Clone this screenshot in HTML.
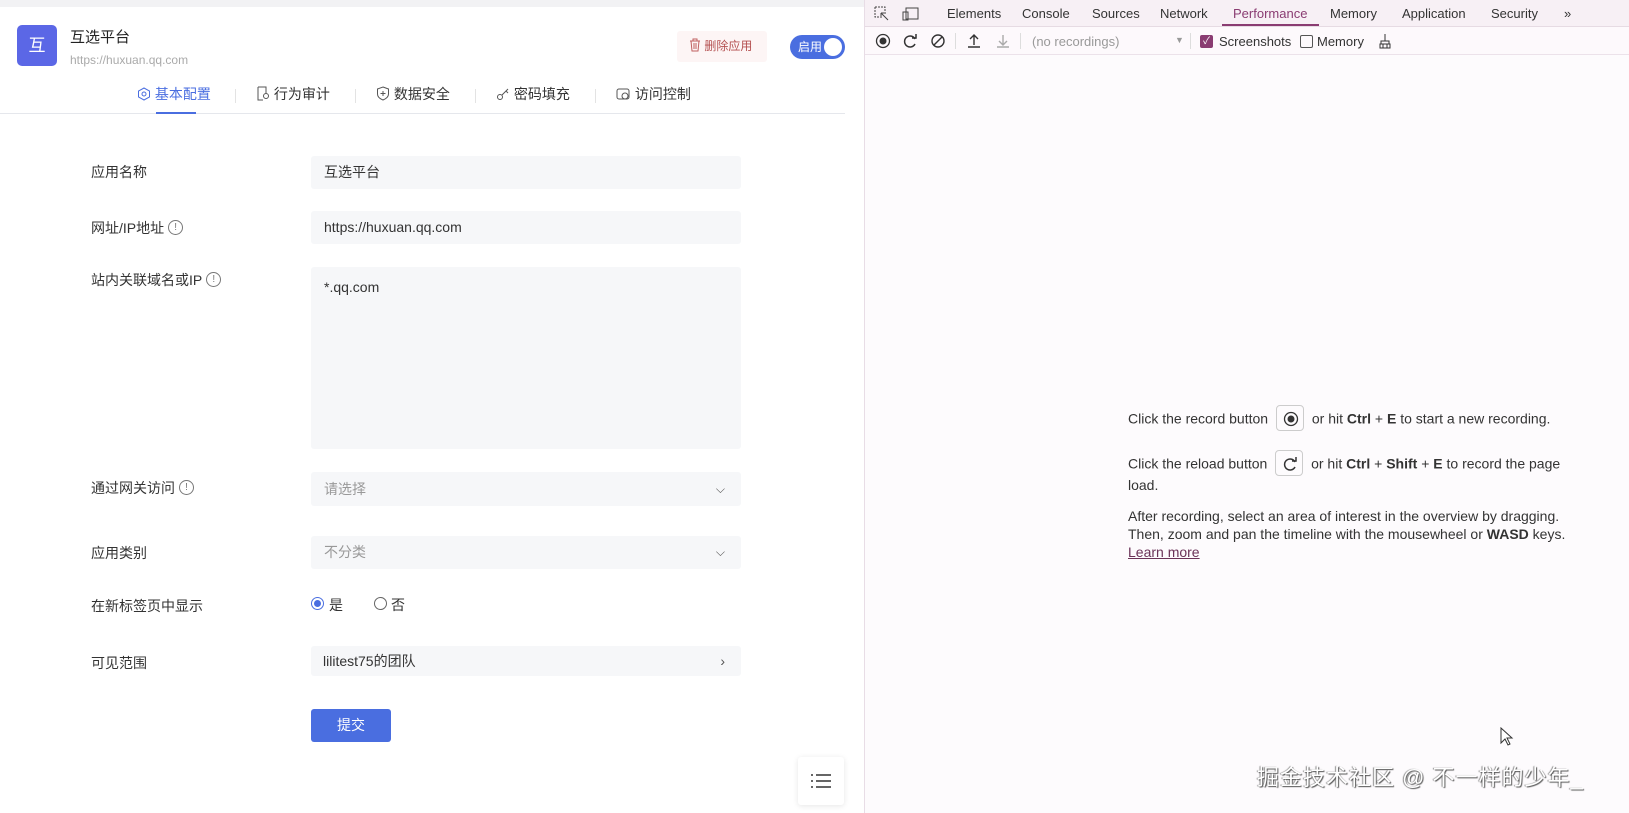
<!DOCTYPE html>
<html><head><meta charset="utf-8"><style>
*{box-sizing:border-box;margin:0;padding:0}
body{width:1629px;height:813px;overflow:hidden;position:relative;background:#fff;font-family:"Liberation Sans","Noto Sans CJK SC",sans-serif;color:#333}
.a{position:absolute}
.lbl{position:absolute;left:91px;font-size:14px;color:#333}
.inp{position:absolute;left:311px;width:430px;background:#f6f7f9;border-radius:3px;font-size:14px;color:#333;padding-left:13px}
.info{display:inline-block;width:15px;height:15px;border:1px solid #777;border-radius:50%;font-size:10px;line-height:13px;text-align:center;color:#777;vertical-align:middle;margin-left:4px;position:relative;top:-2px}
.tab{position:absolute;top:84px;font-size:14px;color:#333}
.sep{position:absolute;top:89px;width:1px;height:14px;background:#e3e3e3}
.dt{position:absolute;top:6px;font-size:13px;color:#333}
.msg{position:absolute;left:1128px;font-size:14px;color:#333}
.kb{display:inline-block;width:28px;height:26px;border:1px solid #ccc;border-radius:4px;vertical-align:middle;margin:0 4px;position:relative}
</style></head><body>
<div class="a" style="left:0;top:0;width:864px;height:7px;background:#f2f2f4"></div>
<div class="a" style="left:17px;top:25px;width:40px;height:41px;background:#5b67e6;border-radius:5px;color:#fff;font-size:17px;text-align:center;line-height:41px">互</div>
<div class="a" style="left:70px;top:26px;font-size:15px;color:#222">互选平台</div>
<div class="a" style="left:70px;top:53px;font-size:12px;color:#aaa">https://huxuan.qq.com</div>
<div class="a" style="left:677px;top:31px;width:90px;height:31px;background:#fdf5f5;border-radius:3px;font-size:12px;color:#b45050;line-height:31px;padding-left:12px">
<svg width="12" height="14" viewBox="0 0 12 14" style="vertical-align:-2px"><path d="M1 3h10M4 3V1h4v2M2 3l1 10h6l1-10M5 5v6M7 5v6" fill="none" stroke="#c06060" stroke-width="1"/></svg> 删除应用</div>
<div class="a" style="left:790px;top:35px;width:55px;height:24px;background:#4a6ee0;border-radius:12px;color:#fff;font-size:12px;line-height:24px;padding-left:8px">启用<span class="a" style="right:3px;top:3px;width:18px;height:18px;background:#fff;border-radius:50%"></span></div>

<div class="tab" style="left:137px;color:#4a6ee0"><svg width="14" height="14" style="vertical-align:-2px"><polygon points="7,1 12.5,4 12.5,10 7,13 1.5,10 1.5,4" fill="none" stroke="#4a6ee0"/><circle cx="7" cy="7" r="2" fill="none" stroke="#4a6ee0"/></svg> 基本配置</div>
<div class="sep" style="left:235px"></div>
<div class="tab" style="left:256px"><svg width="14" height="15" style="vertical-align:-2px"><path d="M2 1h8v6M2 1v13h5" fill="none" stroke="#555"/><circle cx="10" cy="10" r="2.5" fill="none" stroke="#555"/></svg> 行为审计</div>
<div class="sep" style="left:355px"></div>
<div class="tab" style="left:376px"><svg width="14" height="15" style="vertical-align:-2px"><path d="M7 1l5.5 2v5c0 3-3 5-5.5 6C4.5 13 1.5 11 1.5 8V3z M7 5v5M4.5 7.5h5" fill="none" stroke="#555"/></svg> 数据安全</div>
<div class="sep" style="left:475px"></div>
<div class="tab" style="left:496px"><svg width="14" height="14" style="vertical-align:-2px"><circle cx="4" cy="10" r="2.5" fill="none" stroke="#555"/><path d="M6 8l6-6M10 4l2 2" fill="none" stroke="#555"/></svg> 密码填充</div>
<div class="sep" style="left:595px"></div>
<div class="tab" style="left:616px"><svg width="15" height="14" style="vertical-align:-2px"><rect x="1" y="2" width="12" height="10" rx="2" fill="none" stroke="#555"/><circle cx="9" cy="9" r="3" fill="#fff" stroke="#555"/></svg> 访问控制</div>
<div class="a" style="left:0;top:113px;width:845px;height:1px;background:#e5e7ec"></div>
<div class="a" style="left:156px;top:112px;width:40px;height:2px;background:#4a6ee0"></div>

<div class="lbl" style="top:162px">应用名称</div>
<div class="inp" style="top:156px;height:33px;line-height:33px">互选平台</div>
<div class="lbl" style="top:218px">网址/IP地址<span class="info">!</span></div>
<div class="inp" style="top:211px;height:33px;line-height:33px">https://huxuan.qq.com</div>
<div class="lbl" style="top:270px">站内关联域名或IP<span class="info">!</span></div>
<div class="inp" style="top:267px;height:182px;padding-top:12px">*.qq.com</div>
<div class="lbl" style="top:478px">通过网关访问<span class="info">!</span></div>
<div class="inp" style="top:472px;height:34px;line-height:34px;color:#999">请选择<span class="a" style="right:16px;top:0;color:#555;font-size:12px">⌵</span></div>
<div class="lbl" style="top:543px">应用类别</div>
<div class="inp" style="top:536px;height:33px;line-height:33px;color:#999">不分类<span class="a" style="right:16px;top:0;color:#555;font-size:12px">⌵</span></div>
<div class="lbl" style="top:596px">在新标签页中显示</div>
<div class="a" style="left:311px;top:597px;width:13px;height:13px;border:1px solid #4a6ee0;border-radius:50%"><span class="a" style="left:2px;top:2px;width:7px;height:7px;background:#4a6ee0;border-radius:50%"></span></div>
<div class="a" style="left:329px;top:595px;font-size:14px">是</div>
<div class="a" style="left:374px;top:597px;width:13px;height:13px;border:1px solid #666;border-radius:50%"></div>
<div class="a" style="left:391px;top:595px;font-size:14px">否</div>
<div class="lbl" style="top:653px">可见范围</div>
<div class="inp" style="top:646px;height:30px;line-height:30px;padding-left:12px">lilitest75的团队<span class="a" style="right:16px;top:0;color:#555">›</span></div>
<div class="a" style="left:311px;top:709px;width:80px;height:33px;background:#4a6ee0;border-radius:3px;color:#fff;font-size:14px;text-align:center;line-height:33px">提交</div>
<div class="a" style="left:798px;top:757px;width:46px;height:48px;background:#fff;box-shadow:0 1px 6px rgba(0,0,0,.1);border-radius:3px">
<svg class="a" style="left:13px;top:17px" width="20" height="14"><path d="M0 1h2M5 1h15M0 7h2M5 7h15M0 13h2M5 13h15" stroke="#333" stroke-width="1.6"/></svg></div>

<!-- devtools -->
<div class="a" style="left:864px;top:0;width:765px;height:813px;background:#fdfbfd;border-left:1px solid #e8dde6"></div>
<div class="a" style="left:865px;top:0;width:764px;height:27px;background:#f7f0f5;border-bottom:1px solid #e6dbe3"></div>
<div class="a" style="left:865px;top:27px;width:764px;height:28px;background:#fdf9fc;border-bottom:1px solid #ece2ea"></div>
<svg class="a" style="left:874px;top:6px" width="16" height="16"><path d="M1 1h10v4M1 1v10h4" fill="none" stroke="#444" stroke-dasharray="2 1"/><path d="M7 7l7 7M7 7v5M7 7h5" stroke="#444" fill="none"/></svg>
<svg class="a" style="left:902px;top:6px" width="18" height="15"><path d="M4 2h12v11H4zM1 6h5v8H1z" fill="none" stroke="#444"/></svg>
<div class="dt" style="left:947px">Elements</div>
<div class="dt" style="left:1022px">Console</div>
<div class="dt" style="left:1092px">Sources</div>
<div class="dt" style="left:1160px">Network</div>
<div class="dt" style="left:1233px;color:#8a3c72">Performance</div>
<div class="a" style="left:1222px;top:24px;width:97px;height:2px;background:#8a3c72"></div>
<div class="dt" style="left:1330px">Memory</div>
<div class="dt" style="left:1402px">Application</div>
<div class="dt" style="left:1491px">Security</div>
<div class="dt" style="left:1564px">»</div>
<svg class="a" style="left:875px;top:33px" width="16" height="16"><circle cx="8" cy="8" r="6.5" fill="none" stroke="#333" stroke-width="1.3"/><circle cx="8" cy="8" r="3.5" fill="#333"/></svg>
<svg class="a" style="left:902px;top:33px" width="16" height="16"><path d="M13 6A5.5 5.5 0 1 0 13 11" fill="none" stroke="#333" stroke-width="1.5"/><path d="M10 5h4V1" fill="none" stroke="#333" stroke-width="1.5"/></svg>
<svg class="a" style="left:930px;top:33px" width="16" height="16"><circle cx="8" cy="8" r="6" fill="none" stroke="#333" stroke-width="1.4"/><path d="M4 12L12 4" stroke="#333" stroke-width="1.4"/></svg>
<div class="a" style="left:955px;top:33px;width:1px;height:16px;background:#ddd"></div>
<svg class="a" style="left:967px;top:33px" width="14" height="16"><path d="M7 12V2M3 6l4-4 4 4M1 14h12" fill="none" stroke="#333" stroke-width="1.4"/></svg>
<svg class="a" style="left:996px;top:33px" width="14" height="16"><path d="M7 2v10M3 8l4 4 4-4M1 14h12" fill="none" stroke="#aaa" stroke-width="1.4"/></svg>
<div class="a" style="left:1020px;top:33px;width:1px;height:16px;background:#ddd"></div>
<div class="a" style="left:1032px;top:34px;font-size:13px;color:#999">(no recordings)</div>
<div class="a" style="left:1175px;top:35px;font-size:9px;color:#999">▼</div>
<div class="a" style="left:1190px;top:33px;width:1px;height:16px;background:#ddd"></div>
<div class="a" style="left:1200px;top:35px;width:13px;height:13px;background:#8a3c72;border-radius:2px;color:#fff;font-size:10px;text-align:center;line-height:13px">✓</div>
<div class="a" style="left:1219px;top:34px;font-size:13px">Screenshots</div>
<div class="a" style="left:1300px;top:35px;width:13px;height:13px;border:1px solid #555;border-radius:2px"></div>
<div class="a" style="left:1317px;top:34px;font-size:13px">Memory</div>
<svg class="a" style="left:1378px;top:33px" width="14" height="16"><path d="M7 1v7M3 8h8v3H3zM2 11h10v4H2zM5 11v4M9 11v4" fill="none" stroke="#333"/></svg>

<div class="msg" style="top:407px">Click the record button <span class="kb" style="top:-2px"><svg class="a" style="left:6px;top:5px" width="16" height="16"><circle cx="8" cy="8" r="6.5" fill="none" stroke="#333" stroke-width="1.3"/><circle cx="8" cy="8" r="3.5" fill="#333"/></svg></span> or hit <b>Ctrl</b> + <b>E</b> to start a new recording.</div>
<div class="msg" style="top:452px">Click the reload button <span class="kb" style="top:-2px"><svg class="a" style="left:6px;top:5px" width="16" height="16"><path d="M13 6A5.5 5.5 0 1 0 13 11" fill="none" stroke="#333" stroke-width="1.5"/><path d="M10 5h4V1" fill="none" stroke="#333" stroke-width="1.5"/></svg></span> or hit <b>Ctrl</b> + <b>Shift</b> + <b>E</b> to record the page</div>
<div class="msg" style="top:477px">load.</div>
<div class="msg" style="top:507px;line-height:18px">After recording, select an area of interest in the overview by dragging.<br>Then, zoom and pan the timeline with the mousewheel or <b>WASD</b> keys.<br><span style="text-decoration:underline;color:#6b3358">Learn more</span></div>
<svg class="a" style="left:1500px;top:727px" width="14" height="20"><path d="M1 1v15l4-4 3 6 2-1-3-6h5z" fill="#fff" stroke="#333"/></svg>
<div class="a" style="left:1257px;top:760px;font-size:22px;color:#fff;text-shadow:1px 1px 1px #555,-1px 0 1px #888;letter-spacing:1px">掘金技术社区 @ 不一样的少年_</div>
</body></html>
